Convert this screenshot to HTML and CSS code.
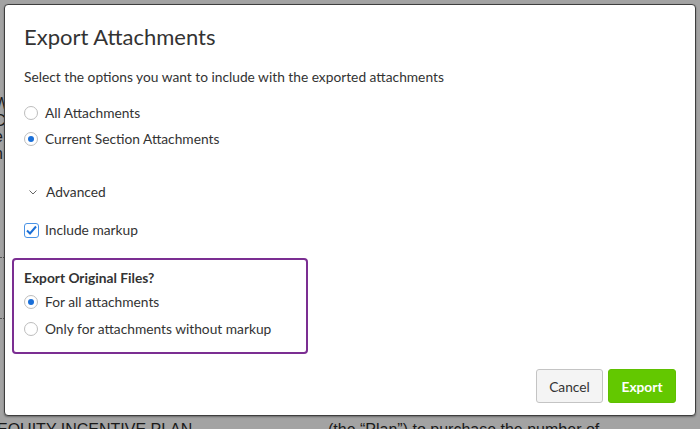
FILE: index.html
```html
<!DOCTYPE html>
<html>
<head>
<meta charset="utf-8">
<link rel="stylesheet" href="styles.css">
</head>
<body>
<div class="doc">
  <span class="frag f1">W</span>
  <span class="frag f2">C</span>
  <span class="frag f3">e</span>
  <span class="frag f4">n</span>
  <span class="dots d1"></span>
  <span class="dots d2"></span>
  <span class="doc-line l1">EQUITY INCENTIVE PLAN</span>
  <span class="doc-line l2">(the “Plan”) to purchase the number of</span>
</div>
<div class="modal">
  <h1 class="title">Export Attachments</h1>
  <p class="intro">Select the options you want to include with the exported attachments</p>
  <div class="group">
    <label class="opt"><span class="radio"></span>All Attachments</label>
    <label class="opt"><span class="radio on"></span>Current Section Attachments</label>
  </div>
  <div class="advanced">
    <svg class="chev" width="8" height="5" viewBox="0 0 8 5"><path d="M0.5 0.5 L4 4 L7.5 0.5" fill="none" stroke="#666" stroke-width="1"/></svg>
    <span>Advanced</span>
  </div>
  <label class="opt check-row"><span class="check"><svg width="13" height="13" viewBox="0 0 13 13"><path d="M2 6.5 L5 9.5 L11 2.5" fill="none" stroke="#1b6fd6" stroke-width="2"/></svg></span>Include markup</label>
  <div class="box">
    <div class="box-title">Export Original Files?</div>
    <label class="opt"><span class="radio on"></span>For all attachments</label>
    <label class="opt"><span class="radio"></span>Only for attachments without markup</label>
  </div>
  <div class="footer">
    <button class="btn cancel">Cancel</button>
    <button class="btn export">Export</button>
  </div>
</div>
</body>
</html>
```
FILE: styles.css
```css
html, body {
  margin: 0;
  padding: 0;
  width: 700px;
  height: 429px;
  overflow: hidden;
}
body {
  background: #a3a3a3;
  font-family: Lato, "Noto Sans", sans-serif;
  color: #333;
  position: relative;
}
.doc {
  position: absolute;
  inset: 0;
  color: #1a1a1a;
  font-family: "Liberation Sans", Arial, sans-serif;
}
.frag {
  position: absolute;
  left: -6px;
  font-size: 16px;
}
.f1 { top: 95px; }
.f2 { top: 112px; }
.f3 { top: 128px; }
.f4 { top: 145px; }
.dots {
  position: absolute;
  left: 0;
  width: 4px;
  border-top: 1px dotted #555;
}
.d1 { top: 257px; }
.d2 { top: 318px; }
.doc-line {
  position: absolute;
  top: 420px;
  font-size: 16px;
  line-height: 20px;
  white-space: nowrap;
}
.l1 { left: -3px; }
.l2 { left: 328px; }
.modal {
  position: relative;
  margin: 4px;
  width: 692px;
  height: 412px;
  box-sizing: border-box;
  background: #fff;
  border: 1px solid #3e3e3e;
  border-radius: 4px;
  padding: 0 23px 0 19px;
  display: flex;
  flex-direction: column;
  box-shadow: 0 1px 2px rgba(0,0,0,0.35);
}
.title {
  margin: 18px 0 0 0;
  font-size: 22px;
  font-weight: 400;
  line-height: 28px;
  color: #333;
}
.intro {
  margin: 17px 0 0 0;
  font-size: 13.75px;
  line-height: 18px;
}
.group {
  display: flex;
  flex-direction: column;
  gap: 8px;
  margin-top: 18px;
}
.opt {
  display: flex;
  align-items: center;
  gap: 7px;
  font-size: 13.75px;
  line-height: 18px;
}
.radio {
  width: 14px;
  height: 14px;
  box-sizing: border-box;
  border: 1px solid #bdbdbd;
  border-radius: 50%;
  background: #fff;
  position: relative;
  flex: none;
}
.radio.on::after {
  content: "";
  position: absolute;
  left: 3px;
  top: 3px;
  width: 6px;
  height: 6px;
  border-radius: 50%;
  background: #1a6fd8;
}
.advanced {
  display: flex;
  align-items: center;
  gap: 9px;
  margin-top: 35px;
  padding-left: 5px;
  font-size: 13.75px;
  line-height: 18px;
}
.chev { flex: none; }
.check-row { margin-top: 20px; gap: 6px; }
.check {
  width: 15px;
  height: 15px;
  box-sizing: border-box;
  border: 1px solid #4a93e6;
  border-radius: 3px;
  display: flex;
  align-items: center;
  justify-content: center;
  flex: none;
}
.box {
  margin: 19px 0 0 -12px;
  width: 296px;
  height: 96px;
  box-sizing: border-box;
  border: 2px solid #7b2e92;
  border-radius: 4px;
  padding: 9px 0 0 10px;
  display: flex;
  flex-direction: column;
  gap: 6px;
}
.box-title {
  font-weight: 700;
  font-size: 13.75px;
  line-height: 18px;
}
.box .opt + .opt { margin-top: 3px; }
.footer {
  margin-top: auto;
  margin-bottom: 12px;
  display: flex;
  justify-content: flex-end;
  gap: 5px;
  margin-right: -4px;
}
.btn {
  height: 34px;
  border-radius: 3px;
  font-family: Lato, "Noto Sans", sans-serif;
  font-size: 13.75px;
  padding: 0;
  box-sizing: border-box;
}
.cancel {
  width: 67px;
  background: #f4f4f4;
  border: 1px solid #c4c4c4;
  color: #333;
}
.export {
  width: 68px;
  background: #63c800;
  border: 1px solid #5fc000;
  color: #fff;
  font-weight: 700;
}
```
